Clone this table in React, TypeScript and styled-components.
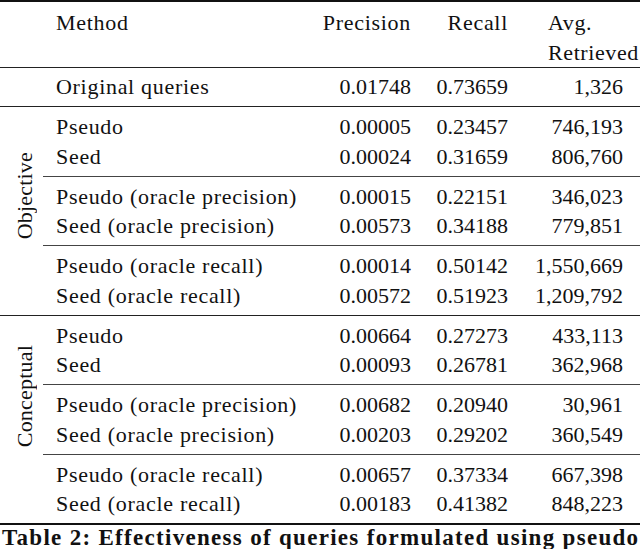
import * as React from 'react'
import styled, { createGlobalStyle } from 'styled-components'

const GlobalStyle = createGlobalStyle`
  html, body {
    margin: 0;
    padding: 0;
    background: #fff;
    overflow: hidden;
  }
  body {
    font-family: 'Liberation Serif', 'Times New Roman', serif;
    color: #111;
  }
`

interface Entry {
  method: string
  precision: string
  recall: string
  retrieved: string
}

interface Section {
  label: string
  span: number
  groups: Entry[][]
}

const original: Entry = { method: 'Original queries', precision: '0.01748', recall: '0.73659', retrieved: '1,326' }

const sections: Section[] = [
  {
    label: 'Objective',
    span: 177,
    groups: [
      [
        { method: 'Pseudo', precision: '0.00005', recall: '0.23457', retrieved: '746,193' },
        { method: 'Seed', precision: '0.00024', recall: '0.31659', retrieved: '806,760' },
      ],
      [
        { method: 'Pseudo (oracle precision)', precision: '0.00015', recall: '0.22151', retrieved: '346,023' },
        { method: 'Seed (oracle precision)', precision: '0.00573', recall: '0.34188', retrieved: '779,851' },
      ],
      [
        { method: 'Pseudo (oracle recall)', precision: '0.00014', recall: '0.50142', retrieved: '1,550,669' },
        { method: 'Seed (oracle recall)', precision: '0.00572', recall: '0.51923', retrieved: '1,209,792' },
      ],
    ],
  },
  {
    label: 'Conceptual',
    span: 161,
    groups: [
      [
        { method: 'Pseudo', precision: '0.00664', recall: '0.27273', retrieved: '433,113' },
        { method: 'Seed', precision: '0.00093', recall: '0.26781', retrieved: '362,968' },
      ],
      [
        { method: 'Pseudo (oracle precision)', precision: '0.00682', recall: '0.20940', retrieved: '30,961' },
        { method: 'Seed (oracle precision)', precision: '0.00203', recall: '0.29202', retrieved: '360,549' },
      ],
      [
        { method: 'Pseudo (oracle recall)', precision: '0.00657', recall: '0.37334', retrieved: '667,398' },
        { method: 'Seed (oracle recall)', precision: '0.00183', recall: '0.41382', retrieved: '848,223' },
      ],
    ],
  },
]

const Page = styled.div`
  width: 640px;
`

const Table = styled.div`
  border-top: 2px solid #111;
  border-bottom: 2px solid #111;
  font-size: 22px;
`

const Head = styled.div`
  padding: 6px 0 0 43px;
  border-bottom: 1px solid #222;
`

const Row = styled.div`
  display: grid;
  grid-template-columns: 1fr 91px 97px 115px;
  padding-right: 17px;
  line-height: 29.5px;
  white-space: nowrap;
`

const MethodCell = styled.div`
  padding-left: 13px;
  letter-spacing: 0.7px;
`

const NumCell = styled.div<{ $word?: boolean }>`
  text-align: right;
  letter-spacing: ${({ $word }) => ($word ? '0.7px' : '0')};
`

const HeadAvg = styled.div`
  padding-left: 40px;
  letter-spacing: 0.6px;
`

const Group = styled.div<{ $rule?: boolean }>`
  padding: 5px 0 4.5px;
  border-top: ${({ $rule }) => ($rule ? '1px solid #444' : 'none')};
`

const Block = styled.div`
  padding-left: 43px;
  border-bottom: 1px solid #222;
`

const SectionRow = styled.div<{ $last?: boolean }>`
  display: flex;
  border-bottom: ${({ $last }) => ($last ? 'none' : '1px solid #222')};
`

const LabelCol = styled.div`
  width: 43px;
  flex: none;
  padding-left: 6px;
  box-sizing: border-box;
`

const LabelBox = styled.div<{ $span: number }>`
  height: ${({ $span }) => $span}px;
  display: flex;
  align-items: center;
  justify-content: center;
`

const Label = styled.div`
  writing-mode: vertical-rl;
  transform: rotate(180deg);
  line-height: 29px;
  white-space: nowrap;
  letter-spacing: 0.2px;
`

const Groups = styled.div`
  flex: 1;
`

const Caption = styled.div`
  font-size: 23px;
  font-weight: bold;
  line-height: 25px;
  padding-left: 2px;
  letter-spacing: 1.3px;
  white-space: nowrap;
  overflow: hidden;
`

const DataRow = ({ e }: { e: Entry }) => (
  <Row>
    <MethodCell>{e.method}</MethodCell>
    <NumCell>{e.precision}</NumCell>
    <NumCell>{e.recall}</NumCell>
    <NumCell>{e.retrieved}</NumCell>
  </Row>
)

export default function App() {
  return (
    <Page>
      <GlobalStyle />
      <Table>
        <Head>
          <Row>
            <MethodCell>Method</MethodCell>
            <NumCell $word>Precision</NumCell>
            <NumCell $word>Recall</NumCell>
            <HeadAvg>Avg.</HeadAvg>
          </Row>
          <Row>
            <div />
            <div />
            <div />
            <HeadAvg>Retrieved</HeadAvg>
          </Row>
        </Head>
        <Block>
          <Group style={{ paddingTop: 4 }}>
            <DataRow e={original} />
          </Group>
        </Block>
        {sections.map((s, si) => (
          <SectionRow key={s.label} $last={si === sections.length - 1}>
            <LabelCol>
              <LabelBox $span={s.span}>
                <Label>{s.label}</Label>
              </LabelBox>
            </LabelCol>
            <Groups>
              {s.groups.map((g, gi) => (
                <Group key={gi} $rule={gi > 0}>
                  {g.map((e) => (
                    <DataRow key={e.method} e={e} />
                  ))}
                </Group>
              ))}
            </Groups>
          </SectionRow>
        ))}
      </Table>
      <Caption>Table 2: Effectiveness of queries formulated using pseudo</Caption>
    </Page>
  )
}
